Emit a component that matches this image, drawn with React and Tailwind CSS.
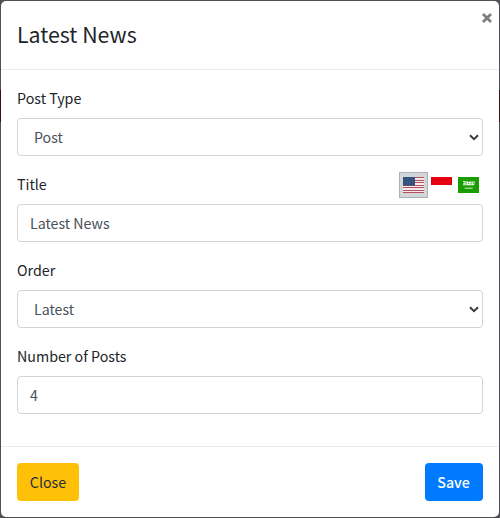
import React from "react";

const control =
  "block h-[38px] w-full appearance-none rounded-[4px] border border-[#ced4da] bg-white text-[14.2px] leading-6 text-[#495057] outline-none";

function Field({ label, htmlFor, extra, children }) {
  return (
    <div className="mb-4">
      <div className="mb-2 flex h-6 items-start justify-between">
        <label htmlFor={htmlFor} className="text-[14.25px] leading-6">
          {label}
        </label>
        {extra}
      </div>
      {children}
    </div>
  );
}

function Select({ id, value }) {
  return (
    <div className="relative">
      <select id={id} defaultValue={value} className={`${control} pl-4 pr-6`}>
        <option>{value}</option>
      </select>
      <svg
        className="pointer-events-none absolute right-[3px] top-[14px] h-[10px] w-[12px]"
        viewBox="0 0 12 10"
        fill="none"
        stroke="#343a40"
        strokeWidth="2"
      >
        <path d="M2 3.2 6 7.1 10 3.2" />
      </svg>
    </div>
  );
}

function FlagUS() {
  return (
    <svg className="h-4 w-[21px]" viewBox="0 0 21 16">
      <rect width="21" height="16" fill="#f6eaec" />
      {[0, 3, 5, 8, 10, 13, 15].map((y) => (
        <rect key={y} y={y} width="21" height="1" fill="#b8505c" />
      ))}
      <rect width="12" height="8.6" fill="#34507e" />
      <g fill="#5a7099">
        {[1.5, 4, 6.5].map((y) =>
          [1.5, 4, 6.5, 9].map((x) => (
            <rect key={`${x}-${y}`} x={x} y={y} width="0.6" height="0.6" />
          ))
        )}
      </g>
    </svg>
  );
}

function FlagID() {
  return (
    <svg className="h-4 w-[21px]" viewBox="0 0 21 16">
      <rect width="21" height="16" fill="#fff" />
      <rect width="21" height="8" fill="#e70011" />
    </svg>
  );
}

function FlagSA() {
  return (
    <svg className="h-4 w-[21px]" viewBox="0 0 21 16">
      <rect width="21" height="16" fill="#199d00" />
      <g fill="none" stroke="#fff" strokeWidth="0.9">
        <path d="M5 4.5h2v2H5.3M5 7.8h3.2V4.3M9.6 4.2v3.3h2V4.6M10 5.5h3M13 4.2v3.5M14.4 4.4v3.2h1.6V4.2M8.5 7.8h7" />
        <path d="M6.7 11.2h8" strokeWidth="0.8" />
      </g>
    </svg>
  );
}

function Languages() {
  return (
    <div className="mr-1 flex h-[26px] items-center">
      <button className="flex h-[26px] w-[29px] shrink-0 items-center justify-center border border-[#adb1b5] bg-[#d3d6d9]">
        <FlagUS />
      </button>
      <button className="ml-[3px]">
        <FlagID />
      </button>
      <button className="ml-[6px]">
        <FlagSA />
      </button>
    </div>
  );
}

export default function App() {
  return (
    <div className="h-[518px] w-[500px] bg-[linear-gradient(#515154_90px,#3a0d18_90px,#3a0d18_122px,#515154_122px)] p-px font-['Noto_Sans_CJK_SC',sans-serif] text-[#212529]">
      <div className="h-[516px] w-[498px] rounded-[5px] bg-white">
        <header className="flex h-[69px] items-start justify-between border-b border-[#e9ecef] pl-4 pt-4">
          <h4 className="-mt-px text-[21.35px] leading-9">Latest News</h4>
          <button aria-label="Close" className="-mt-[4px] mr-[7px]">
            <svg className="h-[10px] w-[10px]" viewBox="0 0 10 10" stroke="#7c7c7c" strokeWidth="2.7">
              <path d="M1 1 9 9M9 1 1 9" />
            </svg>
          </button>
        </header>
        <main className="px-4 pb-4 pt-4">
          <Field label="Post Type" htmlFor="type">
            <Select id="type" value="Post" />
          </Field>
          <Field label="Title" htmlFor="title" extra={<Languages />}>
            <input id="title" defaultValue="Latest News" className={`${control} px-3 pb-px`} />
          </Field>
          <Field label="Order" htmlFor="order">
            <Select id="order" value="Latest" />
          </Field>
          <Field label="Number of Posts" htmlFor="count">
            <input id="count" defaultValue="4" className={`${control} px-3`} />
          </Field>
        </main>
        <footer className="flex justify-between border-t border-[#e9ecef] p-4">
          <button className="h-[38px] w-[62px] rounded-[4px] bg-[#ffc107] text-[14.25px] leading-6 text-[#1f2d3d]">
            Close
          </button>
          <button className="h-[38px] w-[58px] rounded-[4px] bg-[#007bff] pr-px text-[14.2px] font-medium leading-6 text-white">
            Save
          </button>
        </footer>
      </div>
    </div>
  );
}
